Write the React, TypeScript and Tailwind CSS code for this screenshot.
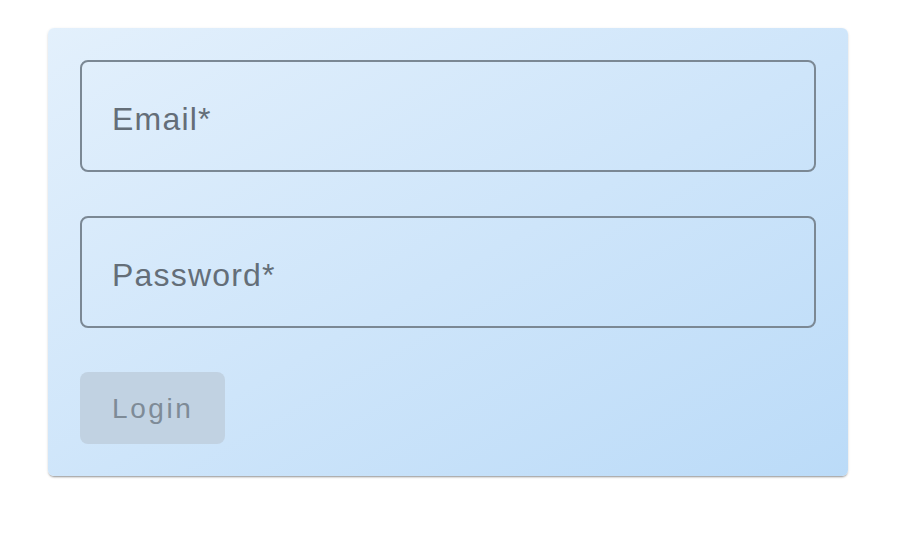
export default function App() {
  return (
    <div className="w-[900px] h-[536px] bg-white pt-[28px] pl-[48px]" style={{ fontFamily: '"Liberation Sans", Arial, sans-serif' }}>
      <div className="w-[800px] rounded-[6px] bg-gradient-to-br from-[#e3f0fc] to-[#bbdbf8] p-8 shadow-[0_2px_2px_-1px_rgba(0,0,0,0.35),0_1px_3px_0_rgba(0,0,0,0.12)]">
        {/* Email */}
        <div className="h-[112px] rounded-[8px] border-2 border-[#7b8894] flex items-center px-[30px] pt-[6px]">
          <span className="text-[32px] tracking-[1.2px] text-[#646e78]">Email*</span>
        </div>

        {/* Password */}
        <div className="mt-[44px] h-[112px] rounded-[8px] border-2 border-[#7b8894] flex items-center px-[30px] pt-[6px]">
          <span className="text-[32px] tracking-[1.2px] text-[#646e78]">Password*</span>
        </div>

        {/* Login */}
        <button
          disabled
          className="mt-[44px] h-[72px] w-[145px] rounded-[8px] bg-[#c1d2e2] flex items-center px-8 pt-[2px]"
        >
          <span className="text-[28px] tracking-[2.6px] text-[#7e8b97]">Login</span>
        </button>
      </div>
    </div>
  );
}
